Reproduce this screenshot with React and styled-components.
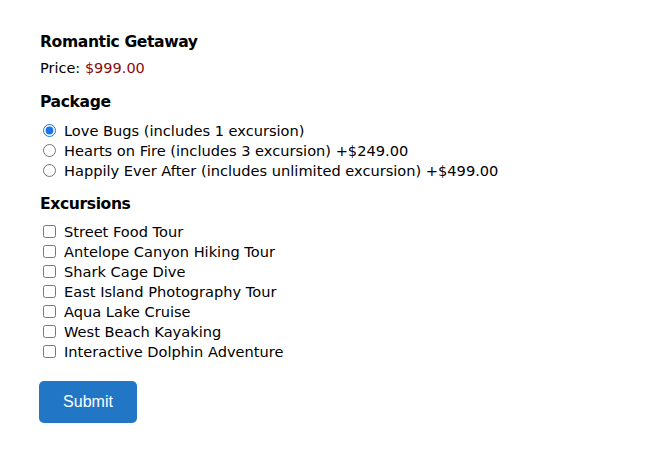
import React from "react";
import styled, { createGlobalStyle } from "styled-components";

const GlobalStyle = createGlobalStyle`
  body {
    margin: 0;
    background: #fff;
    font-family: "DejaVu Sans", Verdana, sans-serif;
    color: #000;
  }
`;

const Page = styled.form`
  padding: 32px 39px;
  display: flex;
  flex-direction: column;
  align-items: flex-start;
`;

const Heading = styled.h3`
  margin: 0 0 ${(p) => p.$gap ?? 8}px 1px;
  font-size: 15.6px;
  font-weight: bold;
  letter-spacing: -0.4px;
  line-height: 20px;
`;

const Price = styled.div`
  font-size: 14.5px;
  line-height: 20px;
  margin: 0 0 14px 1px;
`;

const Amount = styled.span`
  color: #8b0a0a;
`;

const List = styled.div`
  display: flex;
  flex-direction: column;
  margin-bottom: ${(p) => p.$gap ?? 14}px;
`;

const Option = styled.label`
  display: flex;
  align-items: center;
  height: 20px;
  font-size: 14.6px;
  gap: 8px;
  margin-left: 4px;
`;

const Radio = styled.input.attrs({ type: "radio" })`
  margin: 0;
  width: 13px;
  height: 13px;
  accent-color: #1a73e8;
`;

const Check = styled.input.attrs({ type: "checkbox" })`
  margin: 0;
  width: 13px;
  height: 13px;
`;

const Button = styled.button`
  background: #2177c6;
  color: #fff;
  border: none;
  border-radius: 5px;
  width: 98px;
  height: 42px;
  font-family: "Liberation Sans", Arial, sans-serif;
  font-size: 16px;
  cursor: pointer;
`;

const packages = [
  "Love Bugs (includes 1 excursion)",
  "Hearts on Fire (includes 3 excursion) +$249.00",
  "Happily Ever After (includes unlimited excursion) +$499.00",
];

const excursions = [
  "Street Food Tour",
  "Antelope Canyon Hiking Tour",
  "Shark Cage Dive",
  "East Island Photography Tour",
  "Aqua Lake Cruise",
  "West Beach Kayaking",
  "Interactive Dolphin Adventure",
];

export default function App() {
  return (
    <>
      <GlobalStyle />
      <Page onSubmit={(e) => e.preventDefault()}>
        <Heading $gap={6}>Romantic Getaway</Heading>
        <Price>
          Price: <Amount>$999.00</Amount>
        </Price>
        <Heading>Package</Heading>
        <List>
          {packages.map((p, i) => (
            <Option key={p}>
              <Radio name="package" defaultChecked={i === 0} />
              {p}
            </Option>
          ))}
        </List>
        <Heading $gap={7}>Excursions</Heading>
        <List $gap={20}>
          {excursions.map((x) => (
            <Option key={x}>
              <Check />
              {x}
            </Option>
          ))}
        </List>
        <Button type="submit">Submit</Button>
      </Page>
    </>
  );
}
